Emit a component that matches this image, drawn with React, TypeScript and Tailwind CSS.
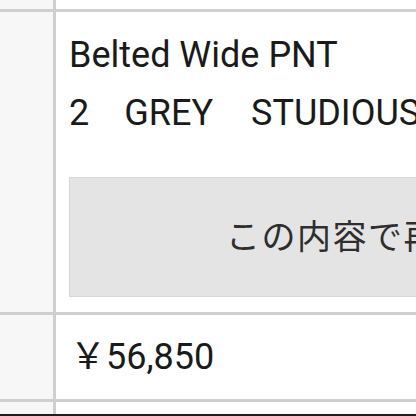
export default function App() {
  return (
    <div
      className="w-[416px] h-[416px] overflow-hidden bg-[#1f1f1f] text-[#1a1a1a]"
      style={{ fontFamily: 'Roboto, "Noto Sans CJK JP", sans-serif' }}
    >
      <div className="grid grid-cols-[53px_1fr] grid-rows-[9px_300px_84px_12px] gap-[3px] bg-[#cfcfcf]">
        <div className="bg-[#f7f7f7]" />
        <div className="bg-white" />

        <div className="bg-[#f7f7f7]" />
        <div className="bg-white pl-[13px] pt-[14px] pb-[15px] flex flex-col overflow-hidden">
          <p className="text-[36px] leading-[58px] whitespace-nowrap">Belted Wide PNT</p>
          <p className="text-[36px] leading-[58px] whitespace-nowrap">
            <span>2</span>
            <span className="ml-[35px]">GREY</span>
            <span className="ml-[38px]">STUDIOUS</span>
          </p>
          <button className="mt-[35px] h-[120px] w-[440px] shrink-0 flex items-center pl-[156px] bg-[#e4e4e4] border border-[#d6d6d6] text-[34px] tracking-[1.5px] text-[#2e2e2e] whitespace-nowrap">
            この内容で再出品する
          </button>
        </div>

        <div className="bg-[#f7f7f7]" />
        <div className="bg-white pl-[14px] flex items-center">
          <p className="text-[36px] leading-none whitespace-nowrap">￥56,850</p>
        </div>

        <div className="bg-[#f7f7f7]" />
        <div className="bg-white" />
      </div>
    </div>
  );
}
